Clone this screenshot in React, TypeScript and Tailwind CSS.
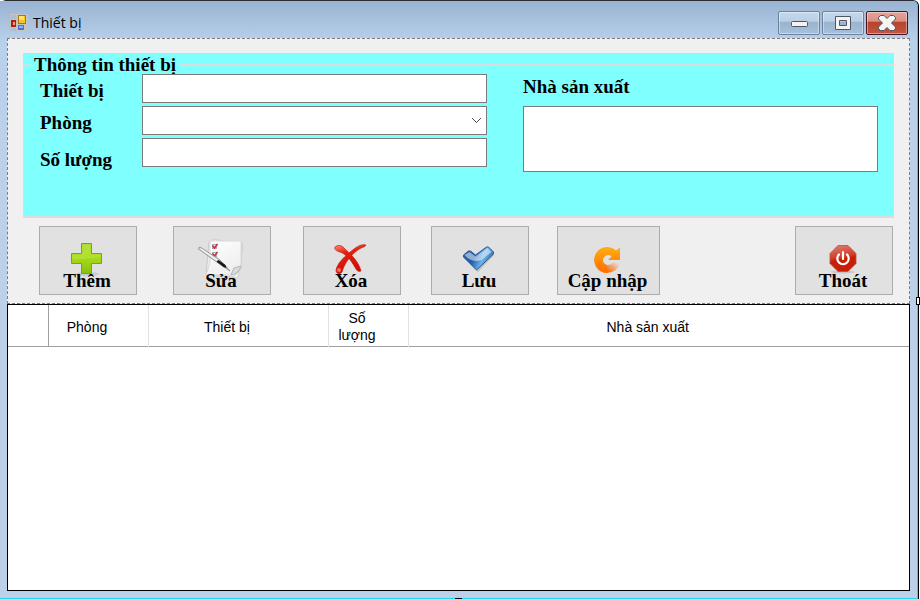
import React from "react";

const inputClass =
  "w-full min-w-0 rounded-none border border-[#7a7a7a] bg-white px-1 text-sm outline-none";

function AppIcon() {
  return (
    <svg width="18" height="18" viewBox="0 0 18 18" aria-hidden="true">
      <rect x="0" y="0" width="18" height="18" fill="#c4c4c4" />
      <rect x="1" y="1" width="5" height="4" fill="#a9bfd8" />
      <rect x="1" y="14" width="5" height="3" fill="#a9bfd8" />
      <rect x="1" y="6" width="5" height="7" fill="#b3200e" />
      <rect x="3" y="8" width="2" height="3" fill="#f59a80" />
      <rect x="8.500" y="1.500" width="7" height="8" fill="#f5c425" stroke="#a97807" />
      <rect x="9" y="2" width="5" height="4" fill="#ffe36a" />
      <rect x="8" y="11" width="6" height="5" fill="#3f75d6" />
      <rect x="9" y="12" width="4" height="2" fill="#8db4f5" />
    </svg>
  );
}

function PlusIcon() {
  return (
    <svg width="36" height="36" viewBox="0 0 36 36" aria-hidden="true">
      <defs>
        <linearGradient id="plus" x1="0" y1="0" x2="0" y2="1">
          <stop offset="0" stopColor="#a9d92c" />
          <stop offset="0.5" stopColor="#a5da18" />
          <stop offset="1" stopColor="#86c010" />
        </linearGradient>
      </defs>
      <ellipse cx="18" cy="33" rx="12" ry="2" fill="#cccccc" />
      <path
        d="M12.500 2.500h10v10h10v10h-10v10h-10v-10h-10v-10h10z"
        fill="url(#plus)"
        stroke="#72a812"
      />
      <path d="M13.500 13.500v-10h8v10h10v3l-28 2v-5z" fill="#c5ee55" opacity="0.35" />
    </svg>
  );
}

function EditIcon() {
  return (
    <svg width="48" height="42" viewBox="0 0 48 42" aria-hidden="true">
      <defs>
        <linearGradient id="paper" x1="0" y1="0" x2="0.6" y2="1">
          <stop offset="0" stopColor="#ffffff" />
          <stop offset="1" stopColor="#eeeeee" />
        </linearGradient>
      </defs>
      <path d="M16 1l30 6-5 33-30-3z" fill="#f1f1f1" stroke="#cfcfcf" />
      <path d="M12 4h33l-1 27-8 8-27-2z" fill="#ebebeb" stroke="#c9c9c9" />
      <path d="M13 3h31v26l-10 8H9l4-12z" fill="url(#paper)" stroke="#dadada" />
      <path d="M44 28c-2 5-5 8-10 9l3-7z" fill="#dcdcdc" stroke="#b5b5b5" />
      <g fill="#e6e9f0" stroke="#a8afc2">
        <rect x="15.500" y="6.500" width="4" height="4" />
        <rect x="15.500" y="14.500" width="4" height="4" />
      </g>
      <path d="M15.500 7.500l2 2.500 3-4M15.500 15.500l2 2.500 3-4" fill="none" stroke="#cf2929" strokeWidth="1.500" />
      <path d="M1 10.500l2-1.500 20 13 10 11-12-8z" fill="#d9d9d9" stroke="#8c8c8c" strokeWidth="0.900" />
      <path d="M4 11l16 11" stroke="#f8f8f8" strokeWidth="1.200" />
      <path d="M19.500 23.500l2-1.500 7 5 1 3-3-1z" fill="#151515" />
    </svg>
  );
}

function DeleteIcon() {
  return (
    <svg width="36" height="32" viewBox="0 0 36 32" aria-hidden="true">
      <defs>
        <linearGradient id="cross" x1="0" y1="0" x2="0.3" y2="1">
          <stop offset="0" stopColor="#ff8a72" />
          <stop offset="0.35" stopColor="#e51f0c" />
          <stop offset="1" stopColor="#d40c05" />
        </linearGradient>
      </defs>
      <path
        d="M2 4c2-2 6-2 8 0 8 8 15 13 18 24-2 1-4 0-5-2C18 17 13 11 7 9 3 8 1 6 2 4z"
        fill="url(#cross)"
        stroke="#c51c10"
        strokeWidth="0.700"
      />
      <path
        d="M33 2c-4-1-8 1-12 4C12 13 5 19 3 27c0 4 4 5 6 2 3-10 9-18 19-24 2-1 4-1 5-3z"
        fill="url(#cross)"
        stroke="#c51c10"
        strokeWidth="0.700"
      />
      <circle cx="6" cy="27" r="2" fill="#ff9c86" opacity="0.7" />
    </svg>
  );
}

function SaveIcon() {
  return (
    <svg width="34" height="28" viewBox="0 0 34 28" aria-hidden="true">
      <defs>
        <linearGradient id="check" x1="0" y1="0.3" x2="1" y2="0.6">
          <stop offset="0" stopColor="#2d5a9c" />
          <stop offset="0.35" stopColor="#1f5fae" />
          <stop offset="0.65" stopColor="#6bb4e8" />
          <stop offset="1" stopColor="#2a69a9" />
        </linearGradient>
      </defs>
      <path d="M3 11l5-4 8 6L26 3l6 5v2L16 27 2 13z" fill="#999999" opacity="0.5" />
      <path d="M1.500 10l5-4h2l5 4L24.500 2h2l5 5v2L14.500 25 1.500 12z" fill="url(#check)" stroke="#315b91" />
      <path d="M2.500 10l5-3 6 4.500L25.500 3l4 4-10 8c-6 2-12 1-17-5z" fill="#ffffff" opacity="0.5" />
    </svg>
  );
}

function RefreshIcon() {
  return (
    <svg width="28" height="28" viewBox="0 0 28 28" aria-hidden="true">
      <defs>
        <linearGradient id="refresh" x1="0" y1="0" x2="0" y2="1">
          <stop offset="0" stopColor="#ffae12" />
          <stop offset="1" stopColor="#ff6c00" />
        </linearGradient>
        <linearGradient id="refreshTail" x1="0" y1="1" x2="1" y2="0">
          <stop offset="0.1" stopColor="#ff7000" />
          <stop offset="0.9" stopColor="#e1e1e1" />
        </linearGradient>
      </defs>
      <path
        d="M13 28A13 13 0 1 1 22 5.500l4-3V15H14l3.500-3.500a5 5 0 1 0-4.500 8.500z"
        fill="url(#refresh)"
      />
      <path d="M13 28v-8q4 0 6-2.500h7Q24 27 13 28z" fill="url(#refreshTail)" />
    </svg>
  );
}

function ExitIcon() {
  return (
    <svg width="30" height="30" viewBox="0 0 30 30" aria-hidden="true">
      <defs>
        <linearGradient id="exit" x1="0" y1="0" x2="0.2" y2="1">
          <stop offset="0" stopColor="#dc8074" />
          <stop offset="0.5" stopColor="#d23d27" />
          <stop offset="0.6" stopColor="#c81e08" />
          <stop offset="1" stopColor="#c91c04" />
        </linearGradient>
      </defs>
      <ellipse cx="15" cy="28" rx="12" ry="1.500" fill="#c6c6c6" />
      <path
        d="M10 1.500h10l8 8v10l-8 8H10l-8-8v-10z"
        fill="url(#exit)"
        stroke="#b55247"
        strokeWidth="0.800"
      />
      <path
        d="M11 10.500a5.700 5.700 0 1 0 8 0"
        fill="none"
        stroke="#ffffff"
        strokeWidth="2.200"
        strokeLinecap="round"
      />
      <path d="M15 8v7" stroke="#ffffff" strokeWidth="2.200" strokeLinecap="round" />
    </svg>
  );
}

function CaptionButton({
  label,
  danger,
  children,
}: {
  label: string;
  danger?: boolean;
  children: React.ReactNode;
}) {
  const tone = danger
    ? "border-[#4b1420] bg-[linear-gradient(#e5a398,#dc8f83_42%,#b7432c_46%,#bd5741)]"
    : "border-[#6c819d] bg-[linear-gradient(#c5d9ec,#bacfe5_42%,#9ab3cf_46%,#a6bfda)]";
  return (
    <button
      type="button"
      aria-label={label}
      className={
        "flex h-6 w-[42px] items-center justify-center rounded-xs border shadow-[inset_0_0_0_1px_#ffffff66] " +
        tone
      }
    >
      {children}
    </button>
  );
}

function ActionButton({
  label,
  icon,
  className,
}: {
  label: string;
  icon: React.ReactNode;
  className: string;
}) {
  return (
    <button
      type="button"
      className={
        "grid h-[69px] shrink-0 border border-[#adadad] bg-[#e1e1e1] pr-0.5 whitespace-nowrap " +
        className
      }
    >
      <span className="col-start-1 row-start-1 flex h-16 items-center justify-center self-start">
        {icon}
      </span>
      <span className="z-10 col-start-1 row-start-1 self-end justify-self-center pb-[3px] leading-5">
        {label}
      </span>
    </button>
  );
}

export default function App() {
  return (
    <div className="bg-white pr-px font-['Liberation_Sans',Arial,sans-serif] text-black">
      <div className="relative flex min-h-screen flex-col rounded-t-md border-t border-r border-t-[#2b2b33] border-r-black bg-[#bcd1ea]">
        <div className="flex grow flex-col rounded-tr-md border-r border-b border-[#27d3ea] bg-linear-to-b from-[#99b3d2] via-[#b9d0ea] via-[40px] to-[#bcd0ea] to-[130px] px-[7px] pb-[7px]">
          <header className="flex h-[37px] items-start justify-between">
            <div className="flex items-center gap-1 pt-3 pl-[3px]">
              <AppIcon />
              <h1 className="pl-px font-['Open_Sans','Noto_Sans',sans-serif] text-sm leading-5">
                Thiết bị
              </h1>
            </div>
            <div className="flex gap-0.5 pt-2.5 pr-0.5">
              <CaptionButton label="Minimize">
                <svg width="18" height="8" viewBox="0 0 18 8" aria-hidden="true">
                  <rect x="1.500" y="2.500" width="16" height="5" rx="1" fill="#f3f3f3" stroke="#4f5667" />
                </svg>
              </CaptionButton>
              <CaptionButton label="Maximize">
                <svg width="18" height="16" viewBox="0 0 18 16" aria-hidden="true">
                  <path
                    d="M1.500 1.500h15v13h-15zM5.500 5.500v5h7v-5z"
                    fill="#f3f3f3"
                    fillRule="evenodd"
                    stroke="#4f5667"
                  />
                </svg>
              </CaptionButton>
              <CaptionButton label="Close" danger>
                <svg width="18" height="16" viewBox="0 0 18 16" aria-hidden="true">
                  <path
                    d="M2.500 0.500h3.500l3 3 3-3h3.500l2 2v1.500L13.500 8l4 4v1.500l-2 2H12l-3-3-3 3H2.500l-2-2V12l4-4-4-4V2.500z"
                    fill="#f5f5f5"
                    stroke="#4f5667"
                    strokeLinejoin="round"
                  />
                </svg>
              </CaptionButton>
            </div>
          </header>

          <form
            className="border border-dashed border-[#7c7c7c] bg-[#f0f0f0] px-[15px] pt-3.5 pb-2 font-['Liberation_Serif','Times_New_Roman',serif] text-[19px] font-bold"
            onSubmit={(e) => e.preventDefault()}
          >
            <div className="bg-[#80ffff] pt-[3px]">
              <fieldset className="grid h-[162px] grid-cols-[minmax(0,447fr)_minmax(0,355fr)] items-start gap-x-9 border-x border-y-2 border-[#dcdcdc] pr-[15px] pl-4">
                <legend className="-ml-2.5 px-1 leading-[18px]">Thông tin thiết bị</legend>
                <div className="grid grid-cols-[102px_minmax(0,1fr)] gap-y-[3px] leading-5">
                  <label htmlFor="device" className="pt-[7px]">
                    Thiết bị
                  </label>
                  <input id="device" type="text" className={inputClass + " h-[29px]"} />
                  <label htmlFor="room" className="pt-[7px]">
                    Phòng
                  </label>
                  <div className="grid">
                    <select
                      id="room"
                      className={inputClass + " col-start-1 row-start-1 h-[29px] appearance-none"}
                    />
                    <svg
                      className="pointer-events-none col-start-1 row-start-1 mr-[5px] self-center justify-self-end"
                      width="11"
                      height="7"
                      viewBox="0 0 11 7"
                      aria-hidden="true"
                    >
                      <path d="M1 1l4.500 4.500L10 1" fill="none" stroke="#4a4a4a" />
                    </svg>
                  </div>
                  <label htmlFor="quantity" className="pt-3">
                    Số lượng
                  </label>
                  <input id="quantity" type="text" className={inputClass + " h-[29px]"} />
                </div>
                <div className="flex flex-col pt-[3px]">
                  <label htmlFor="maker" className="pb-[9px] leading-5">
                    Nhà sản xuất
                  </label>
                  <textarea id="maker" className={inputClass + " h-[66px] resize-none"} />
                </div>
              </fieldset>
            </div>
            <div className="mt-2 flex justify-between pr-px pl-4">
              <div className="flex">
                <ActionButton label="Thêm" icon={<PlusIcon />} className="mr-9 w-[98px]" />
                <ActionButton label="Sửa" icon={<EditIcon />} className="mr-8 w-[98px]" />
                <ActionButton label="Xóa" icon={<DeleteIcon />} className="mr-[30px] w-[98px]" />
                <ActionButton label="Lưu" icon={<SaveIcon />} className="mr-7 w-[98px]" />
                <ActionButton label="Cập nhập" icon={<RefreshIcon />} className="w-[103px]" />
              </div>
              <ActionButton label="Thoát" icon={<ExitIcon />} className="w-[98px]" />
            </div>
          </form>

          <div className="grow border border-black bg-white">
            <table className="w-full table-fixed border-collapse text-sm leading-[17px]">
              <colgroup>
                <col className="w-10" />
                <col className="w-[100px]" />
                <col className="w-[180px]" />
                <col className="w-20" />
                <col />
              </colgroup>
              <thead>
                <tr className="h-[41px] border-b border-[#a0a0a0]">
                  <td className="border-r border-[#a0a0a0]" />
                  <th className="border-r border-[#e2e2e2] pt-1 pr-[22px] font-normal">Phòng</th>
                  <th className="border-r border-[#e2e2e2] pt-1 pr-[22px] font-normal">Thiết bị</th>
                  <th className="border-r border-[#e2e2e2] pt-1 pr-[22px] font-normal">Số lượng</th>
                  <th className="pt-1 pr-[22px] font-normal">Nhà sản xuất</th>
                </tr>
              </thead>
            </table>
          </div>
        </div>
        <span className="absolute top-[296px] -right-0.5 h-2 w-1 border border-black bg-white" />
        <span className="absolute bottom-0 left-1/2 -ml-1 h-px w-[7px] bg-black" />
      </div>
    </div>
  );
}
